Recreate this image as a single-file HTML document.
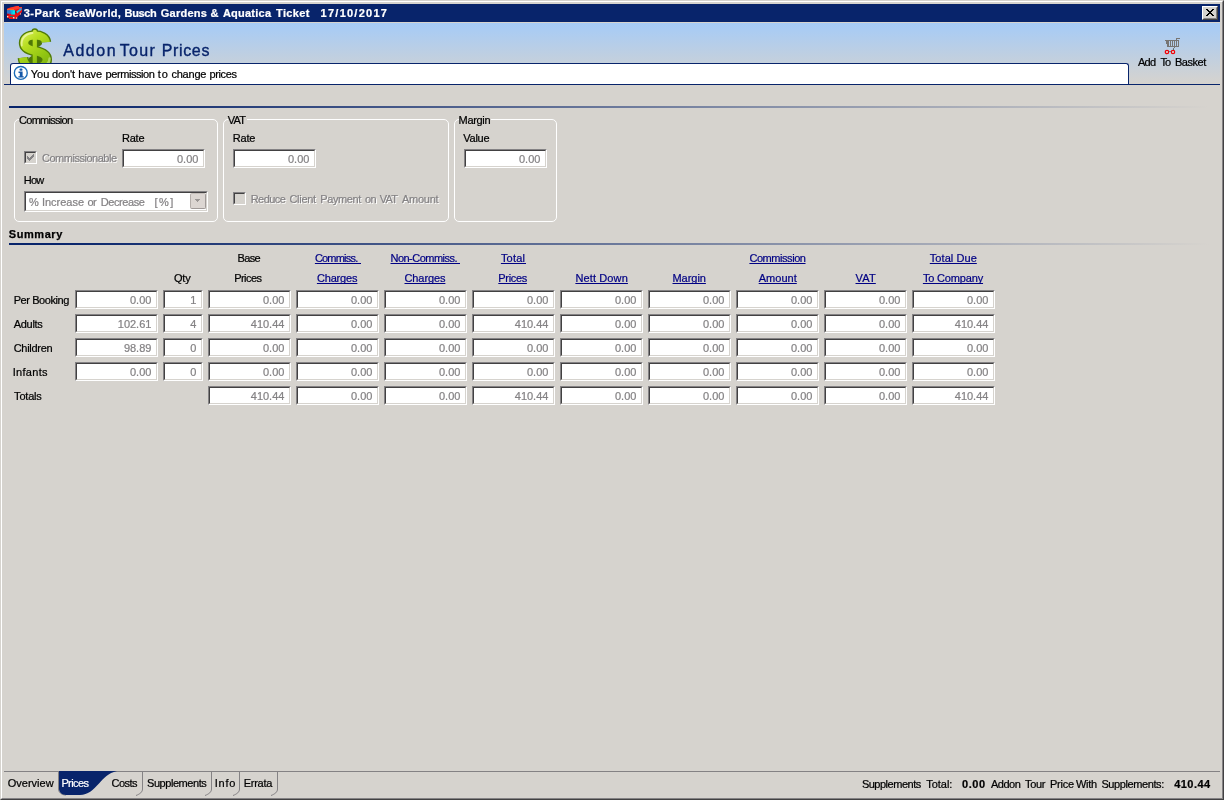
<!DOCTYPE html>
<html>
<head>
<meta charset="utf-8">
<title>Addon Tour Prices</title>
<style>
html,body{margin:0;padding:0;}
body{width:1224px;height:800px;overflow:hidden;background:#d6d3ce;font-family:"Liberation Sans",sans-serif;font-size:11px;color:#000;position:relative;}
.a{position:absolute;white-space:pre;-webkit-text-stroke:0.22px;}
.p{position:absolute;}
.win{left:0;top:0;width:1224px;height:800px;box-sizing:border-box;border:1px solid;border-color:#d6d3ce #424142 #424142 #d6d3ce;}
.win2{left:1px;top:1px;width:1222px;height:798px;box-sizing:border-box;border:1px solid;border-color:#fff #848284 #848284 #fff;}
.title{left:4px;top:4px;width:1216px;height:18px;background:#08246b;}
.close{left:1202px;top:6px;width:16px;height:14px;box-sizing:border-box;background:#d6d3ce;border:1px solid;border-color:#fff #424142 #424142 #fff;}
.close i{position:absolute;left:0;top:0;right:0;bottom:0;border:1px solid;border-color:#d6d3ce #848284 #848284 #d6d3ce;}
.hdr{left:4px;top:23px;width:1216px;height:61px;background:linear-gradient(#a5cbf7,#d6d3ce);}
.hline{left:4px;top:84px;width:1216px;height:1px;background:#08246b;}
.info{left:10px;top:63px;width:1119px;height:21px;box-sizing:border-box;background:#fff;border:1px solid #08246b;border-bottom:none;border-radius:3px 3px 0 0;}
.bl{height:2px;background:linear-gradient(90deg,#08246b 0%,#08246b 4%,#d6d3ce 100%);}
.grp{box-sizing:border-box;border:1px solid #fff;border-radius:5px;}
.gl{background:#d6d3ce;height:3px;}
.in{box-sizing:border-box;height:19px;width:83px;background:#fff;border:1px solid;border-color:#848284 #fff #fff #848284;}
.in i{position:absolute;left:0;top:0;right:0;bottom:0;border:1px solid;border-color:#424142 #d6d3ce #d6d3ce #424142;}
.q{width:40px;}
.v{color:#848284;}
.dis{color:#848284;text-shadow:1px 1px 0 #fff;}
.lnk{color:#000084;text-decoration:underline;text-decoration-skip-ink:none;}
.w{color:#fff;}
.cb{box-sizing:border-box;width:13px;height:13px;background:#d6d3ce;border:1px solid;border-color:#848284 #fff #fff #848284;}
.cb i{position:absolute;left:0;top:0;right:0;bottom:0;border:1px solid;border-color:#424142 #d6d3ce #d6d3ce #424142;}
.sep{width:1px;background:#848284;}
.tx{left:0;top:0;width:1224px;height:800px;will-change:transform;}

</style>
</head>
<body>
<div class="p win"></div><div class="p win2"></div>
<div class="p title"></div>
<div class="p close"><i></i></div>
<div class="p hdr"></div>
<div class="p hline"></div>
<div class="p info"></div>
<div class="p bl" style="left:9px;top:106px;width:1200px"></div>
<div class="p bl" style="left:9px;top:243px;width:1200px"></div>
<!-- groups -->
<div class="p grp" style="left:14px;top:119px;width:204px;height:103px"></div>
<div class="p gl" style="left:19px;top:118px;width:55px"></div>
<div class="p grp" style="left:223px;top:119px;width:226px;height:103px"></div>
<div class="p gl" style="left:228px;top:118px;width:19px"></div>
<div class="p grp" style="left:454px;top:119px;width:103px;height:103px"></div>
<div class="p gl" style="left:459px;top:118px;width:32px"></div>
<!-- group inputs -->
<div class="p cb" style="left:24px;top:151px"><i></i></div>
<div class="p in" style="left:122px;top:149px"><i></i></div>
<div class="p in" style="left:24px;top:191px;width:184px;height:21px"><i></i></div>
<div class="p in" style="left:233px;top:149px"><i></i></div>
<div class="p cb" style="left:233px;top:192px"><i></i></div>
<div class="p in" style="left:464px;top:149px"><i></i></div>
<!-- bottom -->
<div class="p" style="left:4px;top:771px;width:1216px;height:1px;background:#848284"></div>
<div class="p in" style="left:75px;top:290px"><i></i></div>
<div class="p in q" style="left:163px;top:290px"><i></i></div>
<div class="p in" style="left:208px;top:290px"><i></i></div>
<div class="p in" style="left:296px;top:290px"><i></i></div>
<div class="p in" style="left:384px;top:290px"><i></i></div>
<div class="p in" style="left:472px;top:290px"><i></i></div>
<div class="p in" style="left:560px;top:290px"><i></i></div>
<div class="p in" style="left:648px;top:290px"><i></i></div>
<div class="p in" style="left:736px;top:290px"><i></i></div>
<div class="p in" style="left:824px;top:290px"><i></i></div>
<div class="p in" style="left:912px;top:290px"><i></i></div>
<div class="p in" style="left:75px;top:314px"><i></i></div>
<div class="p in q" style="left:163px;top:314px"><i></i></div>
<div class="p in" style="left:208px;top:314px"><i></i></div>
<div class="p in" style="left:296px;top:314px"><i></i></div>
<div class="p in" style="left:384px;top:314px"><i></i></div>
<div class="p in" style="left:472px;top:314px"><i></i></div>
<div class="p in" style="left:560px;top:314px"><i></i></div>
<div class="p in" style="left:648px;top:314px"><i></i></div>
<div class="p in" style="left:736px;top:314px"><i></i></div>
<div class="p in" style="left:824px;top:314px"><i></i></div>
<div class="p in" style="left:912px;top:314px"><i></i></div>
<div class="p in" style="left:75px;top:338px"><i></i></div>
<div class="p in q" style="left:163px;top:338px"><i></i></div>
<div class="p in" style="left:208px;top:338px"><i></i></div>
<div class="p in" style="left:296px;top:338px"><i></i></div>
<div class="p in" style="left:384px;top:338px"><i></i></div>
<div class="p in" style="left:472px;top:338px"><i></i></div>
<div class="p in" style="left:560px;top:338px"><i></i></div>
<div class="p in" style="left:648px;top:338px"><i></i></div>
<div class="p in" style="left:736px;top:338px"><i></i></div>
<div class="p in" style="left:824px;top:338px"><i></i></div>
<div class="p in" style="left:912px;top:338px"><i></i></div>
<div class="p in" style="left:75px;top:362px"><i></i></div>
<div class="p in q" style="left:163px;top:362px"><i></i></div>
<div class="p in" style="left:208px;top:362px"><i></i></div>
<div class="p in" style="left:296px;top:362px"><i></i></div>
<div class="p in" style="left:384px;top:362px"><i></i></div>
<div class="p in" style="left:472px;top:362px"><i></i></div>
<div class="p in" style="left:560px;top:362px"><i></i></div>
<div class="p in" style="left:648px;top:362px"><i></i></div>
<div class="p in" style="left:736px;top:362px"><i></i></div>
<div class="p in" style="left:824px;top:362px"><i></i></div>
<div class="p in" style="left:912px;top:362px"><i></i></div>
<div class="p in" style="left:208px;top:386px"><i></i></div>
<div class="p in" style="left:296px;top:386px"><i></i></div>
<div class="p in" style="left:384px;top:386px"><i></i></div>
<div class="p in" style="left:472px;top:386px"><i></i></div>
<div class="p in" style="left:560px;top:386px"><i></i></div>
<div class="p in" style="left:648px;top:386px"><i></i></div>
<div class="p in" style="left:736px;top:386px"><i></i></div>
<div class="p in" style="left:824px;top:386px"><i></i></div>
<div class="p in" style="left:912px;top:386px"><i></i></div>
<div class="p" style="left:357px;top:263px;width:4px;height:1px;background:#000084"></div>
<div class="p" style="left:456px;top:263px;width:4px;height:1px;background:#000084"></div>
<div class="p" style="left:523px;top:263px;width:3px;height:1px;background:#000084"></div>

<!-- close X -->
<svg class="p" style="left:1206px;top:9px" width="8" height="7" shape-rendering="crispEdges"><path fill="#000" d="M0,0h2v1h-2zM6,0h2v1h-2zM1,1h2v1h-2zM5,1h2v1h-2zM2,2h4v1h-4zM3,3h2v1h-2zM2,4h4v1h-4zM1,5h2v1h-2zM5,5h2v1h-2zM0,6h2v1h-2zM6,6h2v1h-2z"/></svg>
<!-- bus icon -->
<svg class="p" style="left:6px;top:5px" width="17" height="16" viewBox="6 5 17 16">
<path d="M7,9 L9,8 L13,7 L17,6 L19,6 L19,7 L22,7 L22,12 L20.6,13.6 L20.6,15 L19.6,15 L17.4,17 L17,19 L9,19 L9,18 L7,18 Z" fill="#ee1118"/>
<path d="M7,9 L9,8 L13,7 L17,6 L19,6 L19,7 L22,7 L22,8 L16,9.4 L7,10 Z" fill="#ff3a2c"/>
<path d="M7,9.2 L14,9 L14,10 L7,10.2 Z" fill="#ff6a20"/>
<path d="M7,10.2 L11,10 L11,14 L7,13.4 Z" fill="#2a78d0"/>
<path d="M10.6,10 L15.2,10.2 L15,14.6 L11.4,14.4 Z" fill="#00e6f4"/>
<path d="M11,10 L13,10 L12.4,14.2 L11.2,14.2 Z" fill="#10b4dc"/>
<path d="M15.3,10.6 L16.6,11.4 L16.6,13.4 L15.3,12.8 Z" fill="#40202c"/>
<path d="M16.4,11.2 L21.4,8.2 L21.4,10 L17,13.6 Z" fill="#18c8e8"/>
<path d="M19.4,8.6 L21.4,8 L21.4,9.4 L19.6,10.8 Z" fill="#3a9ce0"/>
<path d="M7,14 L9,14.2 L9,15 L7,15 Z" fill="#b00010"/>
<rect x="7" y="16" width="1.3" height="1.3" fill="#e8f0d0"/>
<rect x="10" y="16" width="3.4" height="1" rx="0.5" fill="#0a8474"/>
<rect x="13" y="17" width="1.4" height="1.4" fill="#c8f4e8"/>
<rect x="16.4" y="17" width="0.7" height="2" fill="#d8e8d0"/>
<rect x="20.2" y="13" width="0.6" height="1.6" fill="#d8e8d0"/>
</svg>
<!-- dollar -->
<svg class="p" style="left:10px;top:23px" width="52" height="40" viewBox="10 23 52 40">
<defs>
<linearGradient id="dg" gradientUnits="userSpaceOnUse" x1="20" y1="28" x2="50" y2="68"><stop offset="0" stop-color="#e4f46a"/><stop offset="0.35" stop-color="#b8de22"/><stop offset="0.7" stop-color="#92c612"/><stop offset="1" stop-color="#7aae10"/></linearGradient>
</defs>
<ellipse cx="35" cy="43.2" rx="7" ry="4" fill="#4d7508"/>
<ellipse cx="35.4" cy="59.8" rx="7" ry="4.2" fill="#4d7508"/>
<g fill="none" stroke-linecap="butt" stroke-linejoin="round">
<path d="M45.8,42.2 C45.5,38 41,35.6 35,35.6 C28,35.6 24.2,38.5 24.2,43 C24.2,47.5 28,49.5 35,51 C42,52.5 46.6,54.5 46.6,59.5 C46.6,65 41,68 35,68 C28,68 24,65 23,57.6" stroke="#507a06" stroke-width="10.8"/>
<path d="M34.8,31.6 L34.8,72" stroke="#507a06" stroke-width="6.6" stroke-linecap="round"/>
<path d="M45.8,42.2 C45.5,38 41,35.6 35,35.6 C28,35.6 24.2,38.5 24.2,43 C24.2,47.5 28,49.5 35,51 C42,52.5 46.6,54.5 46.6,59.5 C46.6,65 41,68 35,68 C28,68 24,65 23,57.6" stroke="url(#dg)" stroke-width="8"/>
<path d="M34.8,31.8 L34.8,72" stroke="url(#dg)" stroke-width="4.2" stroke-linecap="round"/>
<path d="M21.8,45.5 C20.8,39 25,34 32.5,33" stroke="#ffffe0" stroke-width="1.8" opacity="0.55" stroke-linecap="round"/>
<path d="M40,66.5 C45,66 49.5,63.5 49.6,58.5" stroke="#f0ffd0" stroke-width="2.4" opacity="0.4" stroke-linecap="round"/>
</g>
</svg>
<!-- info icon -->
<svg class="p" style="left:13px;top:65px" width="16" height="16" viewBox="0 0 16 16">
<circle cx="7.8" cy="7.9" r="6.45" fill="#fff" stroke="#1a6cb8" stroke-width="1.35"/>
<rect x="6.5" y="3.4" width="3" height="2.4" rx="1" fill="#1458a8"/>
<path d="M5.5,6.6h4.1v4.6h1.1v1.3h-5.3v-1.3h1.4v-3.3h-1.3z" fill="#1458a8"/>
</svg>
<!-- cart -->
<svg class="p" style="left:1165px;top:38px" width="16" height="17" shape-rendering="crispEdges">
<g fill="#777573">
<rect x="11" y="0" width="4" height="1"/>
<rect x="11" y="1" width="1" height="2"/>
<rect x="0" y="2" width="14" height="1"/>
<rect x="1" y="3" width="1" height="3"/>
<rect x="2" y="3" width="2" height="6"/>
<rect x="5" y="3" width="1" height="6"/>
<rect x="7" y="3" width="1" height="6"/>
<rect x="9" y="3" width="1" height="6"/>
<rect x="11" y="3" width="1" height="6"/>
<rect x="13" y="3" width="1" height="6"/>
<rect x="2" y="8" width="12" height="1"/>
<rect x="9" y="9" width="1" height="1"/>
<rect x="8" y="10" width="1" height="1"/>
</g>
<rect x="8" y="11" width="1" height="1" fill="#2a8a8a"/>
<rect x="4" y="13" width="3" height="1" fill="#4a9a9a"/>
</svg>
<svg class="p" style="left:1164px;top:49px" width="14" height="7">
<circle cx="3" cy="3" r="1.6" fill="#d8fff8" stroke="#f00008" stroke-width="1.4"/>
<circle cx="9" cy="3" r="1.6" fill="#d8fff8" stroke="#f00008" stroke-width="1.4"/>
</svg>
<!-- check mark -->
<svg class="p" style="left:27px;top:154px" width="7" height="7" shape-rendering="crispEdges"><path fill="#848284" d="M0,2h1v3h-1zM1,3h1v3h-1zM2,4h1v3h-1zM3,3h1v3h-1zM4,2h1v3h-1zM5,1h1v3h-1zM6,0h1v3h-1z"/></svg>
<!-- combo button -->
<div class="p" style="left:190px;top:193px;width:16px;height:16px;box-sizing:border-box;background:#dcd6d2;border:1px solid;border-color:#c4beba #a09a98 #a09a98 #b4aeaa;border-radius:2px"></div>
<svg class="p" style="left:195px;top:199px" width="5" height="3" shape-rendering="crispEdges"><path fill="#9a9694" d="M0,0h5v1h-5zM1,1h3v1h-3zM2,2h1v1h-1z"/></svg>
<!-- tabs -->
<svg class="p" style="left:0;top:770px" width="320" height="28">
<path d="M58.5,1.5 L58.5,19 C58.5,22 61,25 66,25" fill="none" stroke="#848284" stroke-width="1"/>
<path d="M59,1 L117,1 C108,3 104,8 99,13.5 C93,20 88,25 80,25 L66,25 C62,25 59,22 59,19 Z" fill="#08246b"/>
<g fill="none" stroke="#848284" stroke-width="1">
<path d="M142.5,2 L142.5,19 C142.5,22 140,24 136,25.5"/>
<path d="M211.5,2 L211.5,19 C211.5,22 209,24 205,25.5"/>
<path d="M239.5,2 L239.5,19 C239.5,22 237,24 233,25.5"/>
<path d="M277.5,2 L277.5,19 C277.5,22 275,24 271,25.5"/>
</g>
</svg>

<div class="p tx">
<span class="a w" style="left:23.70px;top:6.69px;letter-spacing:0.52px;line-height:13px;font-weight:bold;">3-Park</span>
<span class="a w" style="left:64.90px;top:6.69px;letter-spacing:0.3px;line-height:13px;font-weight:bold;">SeaWorld,</span>
<span class="a w" style="left:124.60px;top:6.69px;letter-spacing:-0.37px;line-height:13px;font-weight:bold;">Busch</span>
<span class="a w" style="left:160.80px;top:6.69px;letter-spacing:0.25px;line-height:13px;font-weight:bold;">Gardens</span>
<span class="a w" style="left:210.50px;top:6.69px;letter-spacing:0.0px;line-height:13px;font-weight:bold;">&amp;</span>
<span class="a w" style="left:222.90px;top:6.69px;letter-spacing:0.24px;line-height:13px;font-weight:bold;">Aquatica</span>
<span class="a w" style="left:276.00px;top:6.69px;letter-spacing:0.37px;line-height:13px;font-weight:bold;">Ticket</span>
<span class="a w" style="left:320.60px;top:6.69px;letter-spacing:1.25px;line-height:13px;font-weight:bold;">17/10/2017</span>
<span class="a " style="left:63.20px;top:40.96px;letter-spacing:1.53px;line-height:19px;font-size:16px;color:#08246b;-webkit-text-stroke:0.35px #08246b;">Addon</span>
<span class="a " style="left:119.70px;top:40.96px;letter-spacing:1.37px;line-height:19px;font-size:16px;color:#08246b;-webkit-text-stroke:0.35px #08246b;">Tour</span>
<span class="a " style="left:161.80px;top:40.96px;letter-spacing:0.63px;line-height:19px;font-size:16px;color:#08246b;-webkit-text-stroke:0.35px #08246b;">Prices</span>
<span class="a " style="left:30.70px;top:67.69px;letter-spacing:0.03px;line-height:13px;">You</span>
<span class="a " style="left:51.90px;top:67.69px;letter-spacing:-0.06px;line-height:13px;">don't</span>
<span class="a " style="left:78.30px;top:67.69px;letter-spacing:-0.01px;line-height:13px;">have</span>
<span class="a " style="left:105.60px;top:67.69px;letter-spacing:-0.44px;line-height:13px;">permission</span>
<span class="a " style="left:157.80px;top:67.69px;letter-spacing:0.94px;line-height:13px;">to</span>
<span class="a " style="left:171.40px;top:67.69px;letter-spacing:-0.21px;line-height:13px;">change</span>
<span class="a " style="left:209.50px;top:67.69px;letter-spacing:-0.39px;line-height:13px;">prices</span>
<span class="a " style="left:1138.00px;top:55.69px;letter-spacing:-0.78px;line-height:13px;">Add</span>
<span class="a " style="left:1160.38px;top:55.69px;letter-spacing:-0.85px;line-height:13px;">To</span>
<span class="a " style="left:1175.00px;top:55.69px;letter-spacing:-0.47px;line-height:13px;">Basket</span>
<span class="a " style="left:19.00px;top:113.69px;letter-spacing:-0.71px;line-height:13px;">Commission</span>
<span class="a " style="left:122.00px;top:131.69px;letter-spacing:-0.24px;line-height:13px;">Rate</span>
<span class="a dis" style="left:42.00px;top:151.69px;letter-spacing:-0.48px;line-height:13px;">Commissionable</span>
<span class="a " style="left:23.82px;top:173.69px;letter-spacing:-0.85px;line-height:13px;">How</span>
<span class="a v" style="left:28.90px;top:195.69px;letter-spacing:0.0px;line-height:13px;">%</span>
<span class="a v" style="left:41.90px;top:195.69px;letter-spacing:0.0px;line-height:13px;">Increase</span>
<span class="a v" style="left:87.62px;top:195.69px;letter-spacing:-0.85px;line-height:13px;">or</span>
<span class="a v" style="left:100.80px;top:195.69px;letter-spacing:-0.42px;line-height:13px;">Decrease</span>
<span class="a v" style="left:154.60px;top:195.69px;letter-spacing:1.38px;line-height:13px;">[%]</span>
<span class="a " style="left:227.80px;top:113.69px;letter-spacing:-0.82px;line-height:13px;">VAT</span>
<span class="a " style="left:232.80px;top:131.69px;letter-spacing:-0.24px;line-height:13px;">Rate</span>
<span class="a dis" style="left:250.70px;top:192.69px;letter-spacing:-0.54px;line-height:13px;">Reduce</span>
<span class="a dis" style="left:289.40px;top:192.69px;letter-spacing:-0.27px;line-height:13px;">Client</span>
<span class="a dis" style="left:320.20px;top:192.69px;letter-spacing:-0.38px;line-height:13px;">Payment</span>
<span class="a dis" style="left:365.10px;top:192.69px;letter-spacing:-0.72px;line-height:13px;">on</span>
<span class="a dis" style="left:379.80px;top:192.69px;letter-spacing:-0.77px;line-height:13px;">VAT</span>
<span class="a dis" style="left:401.90px;top:192.69px;letter-spacing:-0.23px;line-height:13px;">Amount</span>
<span class="a " style="left:458.60px;top:113.69px;letter-spacing:-0.34px;line-height:13px;">Margin</span>
<span class="a " style="left:463.20px;top:131.69px;letter-spacing:-0.22px;line-height:13px;">Value</span>
<span class="a " style="left:8.80px;top:227.69px;letter-spacing:0.56px;line-height:13px;font-weight:bold;-webkit-text-stroke:0.25px #000;">Summary</span>
<span class="a " style="left:174.00px;top:271.69px;letter-spacing:-0.21px;line-height:13px;">Qty</span>
<span class="a " style="left:237.60px;top:251.69px;letter-spacing:-0.68px;line-height:13px;">Base</span>
<span class="a " style="left:234.30px;top:271.69px;letter-spacing:-0.59px;line-height:13px;">Prices</span>
<span class="a lnk" style="left:314.90px;top:251.69px;letter-spacing:-0.79px;line-height:13px;">Commiss.</span>
<span class="a lnk" style="left:316.90px;top:271.69px;letter-spacing:-0.16px;line-height:13px;">Charges</span>
<span class="a lnk" style="left:390.50px;top:251.69px;letter-spacing:-0.52px;line-height:13px;">Non-Commiss.</span>
<span class="a lnk" style="left:404.50px;top:271.69px;letter-spacing:-0.1px;line-height:13px;">Charges</span>
<span class="a lnk" style="left:500.90px;top:251.69px;letter-spacing:0.23px;line-height:13px;">Total</span>
<span class="a lnk" style="left:498.30px;top:271.69px;letter-spacing:-0.33px;line-height:13px;">Prices</span>
<span class="a lnk" style="left:575.40px;top:271.69px;letter-spacing:0.13px;line-height:13px;">Nett Down</span>
<span class="a lnk" style="left:672.50px;top:271.69px;letter-spacing:-0.04px;line-height:13px;">Margin</span>
<span class="a lnk" style="left:749.40px;top:251.69px;letter-spacing:-0.44px;line-height:13px;">Commission</span>
<span class="a lnk" style="left:758.70px;top:271.69px;letter-spacing:0.03px;line-height:13px;">Amount</span>
<span class="a lnk" style="left:855.50px;top:271.69px;letter-spacing:0.18px;line-height:13px;">VAT</span>
<span class="a lnk" style="left:929.80px;top:251.69px;letter-spacing:0.06px;line-height:13px;">Total Due</span>
<span class="a lnk" style="left:922.90px;top:271.69px;letter-spacing:-0.16px;line-height:13px;">To Company</span>
<span class="a " style="left:13.70px;top:293.69px;letter-spacing:-0.42px;line-height:13px;">Per Booking</span>
<span class="a " style="left:13.70px;top:317.69px;letter-spacing:-0.29px;line-height:13px;">Adults</span>
<span class="a " style="left:13.70px;top:341.69px;letter-spacing:-0.29px;line-height:13px;">Children</span>
<span class="a " style="left:12.70px;top:365.69px;letter-spacing:0.31px;line-height:13px;">Infants</span>
<span class="a " style="left:14.10px;top:389.69px;letter-spacing:-0.21px;line-height:13px;">Totals</span>
<span class="a v" style="left:130.01px;top:293.69px;letter-spacing:0px;line-height:13px;">0.00</span>
<span class="a v" style="left:190.30px;top:293.69px;letter-spacing:0px;line-height:13px;">1</span>
<span class="a v" style="left:263.01px;top:293.69px;letter-spacing:0px;line-height:13px;">0.00</span>
<span class="a v" style="left:351.01px;top:293.69px;letter-spacing:0px;line-height:13px;">0.00</span>
<span class="a v" style="left:439.01px;top:293.69px;letter-spacing:0px;line-height:13px;">0.00</span>
<span class="a v" style="left:527.01px;top:293.69px;letter-spacing:0px;line-height:13px;">0.00</span>
<span class="a v" style="left:615.01px;top:293.69px;letter-spacing:0px;line-height:13px;">0.00</span>
<span class="a v" style="left:703.01px;top:293.69px;letter-spacing:0px;line-height:13px;">0.00</span>
<span class="a v" style="left:791.01px;top:293.69px;letter-spacing:0px;line-height:13px;">0.00</span>
<span class="a v" style="left:879.01px;top:293.69px;letter-spacing:0px;line-height:13px;">0.00</span>
<span class="a v" style="left:967.01px;top:293.69px;letter-spacing:0px;line-height:13px;">0.00</span>
<span class="a v" style="left:117.77px;top:317.69px;letter-spacing:0px;line-height:13px;">102.61</span>
<span class="a v" style="left:190.30px;top:317.69px;letter-spacing:0px;line-height:13px;">4</span>
<span class="a v" style="left:250.77px;top:317.69px;letter-spacing:0px;line-height:13px;">410.44</span>
<span class="a v" style="left:351.01px;top:317.69px;letter-spacing:0px;line-height:13px;">0.00</span>
<span class="a v" style="left:439.01px;top:317.69px;letter-spacing:0px;line-height:13px;">0.00</span>
<span class="a v" style="left:514.77px;top:317.69px;letter-spacing:0px;line-height:13px;">410.44</span>
<span class="a v" style="left:615.01px;top:317.69px;letter-spacing:0px;line-height:13px;">0.00</span>
<span class="a v" style="left:703.01px;top:317.69px;letter-spacing:0px;line-height:13px;">0.00</span>
<span class="a v" style="left:791.01px;top:317.69px;letter-spacing:0px;line-height:13px;">0.00</span>
<span class="a v" style="left:879.01px;top:317.69px;letter-spacing:0px;line-height:13px;">0.00</span>
<span class="a v" style="left:954.77px;top:317.69px;letter-spacing:0px;line-height:13px;">410.44</span>
<span class="a v" style="left:123.89px;top:341.69px;letter-spacing:0px;line-height:13px;">98.89</span>
<span class="a v" style="left:190.30px;top:341.69px;letter-spacing:0px;line-height:13px;">0</span>
<span class="a v" style="left:263.01px;top:341.69px;letter-spacing:0px;line-height:13px;">0.00</span>
<span class="a v" style="left:351.01px;top:341.69px;letter-spacing:0px;line-height:13px;">0.00</span>
<span class="a v" style="left:439.01px;top:341.69px;letter-spacing:0px;line-height:13px;">0.00</span>
<span class="a v" style="left:527.01px;top:341.69px;letter-spacing:0px;line-height:13px;">0.00</span>
<span class="a v" style="left:615.01px;top:341.69px;letter-spacing:0px;line-height:13px;">0.00</span>
<span class="a v" style="left:703.01px;top:341.69px;letter-spacing:0px;line-height:13px;">0.00</span>
<span class="a v" style="left:791.01px;top:341.69px;letter-spacing:0px;line-height:13px;">0.00</span>
<span class="a v" style="left:879.01px;top:341.69px;letter-spacing:0px;line-height:13px;">0.00</span>
<span class="a v" style="left:967.01px;top:341.69px;letter-spacing:0px;line-height:13px;">0.00</span>
<span class="a v" style="left:130.01px;top:365.69px;letter-spacing:0px;line-height:13px;">0.00</span>
<span class="a v" style="left:190.30px;top:365.69px;letter-spacing:0px;line-height:13px;">0</span>
<span class="a v" style="left:263.01px;top:365.69px;letter-spacing:0px;line-height:13px;">0.00</span>
<span class="a v" style="left:351.01px;top:365.69px;letter-spacing:0px;line-height:13px;">0.00</span>
<span class="a v" style="left:439.01px;top:365.69px;letter-spacing:0px;line-height:13px;">0.00</span>
<span class="a v" style="left:527.01px;top:365.69px;letter-spacing:0px;line-height:13px;">0.00</span>
<span class="a v" style="left:615.01px;top:365.69px;letter-spacing:0px;line-height:13px;">0.00</span>
<span class="a v" style="left:703.01px;top:365.69px;letter-spacing:0px;line-height:13px;">0.00</span>
<span class="a v" style="left:791.01px;top:365.69px;letter-spacing:0px;line-height:13px;">0.00</span>
<span class="a v" style="left:879.01px;top:365.69px;letter-spacing:0px;line-height:13px;">0.00</span>
<span class="a v" style="left:967.01px;top:365.69px;letter-spacing:0px;line-height:13px;">0.00</span>
<span class="a v" style="left:250.77px;top:389.69px;letter-spacing:0px;line-height:13px;">410.44</span>
<span class="a v" style="left:351.01px;top:389.69px;letter-spacing:0px;line-height:13px;">0.00</span>
<span class="a v" style="left:439.01px;top:389.69px;letter-spacing:0px;line-height:13px;">0.00</span>
<span class="a v" style="left:514.77px;top:389.69px;letter-spacing:0px;line-height:13px;">410.44</span>
<span class="a v" style="left:615.01px;top:389.69px;letter-spacing:0px;line-height:13px;">0.00</span>
<span class="a v" style="left:703.01px;top:389.69px;letter-spacing:0px;line-height:13px;">0.00</span>
<span class="a v" style="left:791.01px;top:389.69px;letter-spacing:0px;line-height:13px;">0.00</span>
<span class="a v" style="left:879.01px;top:389.69px;letter-spacing:0px;line-height:13px;">0.00</span>
<span class="a v" style="left:954.77px;top:389.69px;letter-spacing:0px;line-height:13px;">410.44</span>
<span class="a v" style="left:177.01px;top:152.69px;letter-spacing:0px;line-height:13px;">0.00</span>
<span class="a v" style="left:288.01px;top:152.69px;letter-spacing:0px;line-height:13px;">0.00</span>
<span class="a v" style="left:519.01px;top:152.69px;letter-spacing:0px;line-height:13px;">0.00</span>
<span class="a " style="left:7.80px;top:776.69px;letter-spacing:-0.01px;line-height:13px;">Overview</span>
<span class="a w" style="left:61.40px;top:776.69px;letter-spacing:-0.61px;line-height:13px;">Prices</span>
<span class="a " style="left:111.60px;top:776.69px;letter-spacing:-0.55px;line-height:13px;">Costs</span>
<span class="a " style="left:147.00px;top:776.69px;letter-spacing:-0.44px;line-height:13px;">Supplements</span>
<span class="a " style="left:214.70px;top:776.69px;letter-spacing:0.79px;line-height:13px;">Info</span>
<span class="a " style="left:243.70px;top:776.69px;letter-spacing:-0.27px;line-height:13px;">Errata</span>
<span class="a " style="left:861.90px;top:777.69px;letter-spacing:-0.49px;line-height:13px;">Supplements</span>
<span class="a " style="left:926.30px;top:777.69px;letter-spacing:-0.05px;line-height:13px;">Total:</span>
<span class="a " style="left:961.90px;top:777.69px;letter-spacing:0.64px;line-height:13px;font-weight:bold;">0.00</span>
<span class="a " style="left:990.90px;top:777.69px;letter-spacing:-0.45px;line-height:13px;">Addon</span>
<span class="a " style="left:1025.10px;top:777.69px;letter-spacing:-0.35px;line-height:13px;">Tour</span>
<span class="a " style="left:1049.90px;top:777.69px;letter-spacing:-0.21px;line-height:13px;">Price</span>
<span class="a " style="left:1076.00px;top:777.69px;letter-spacing:-0.29px;line-height:13px;">With</span>
<span class="a " style="left:1101.40px;top:777.69px;letter-spacing:-0.4px;line-height:13px;">Supplements:</span>
<span class="a " style="left:1174.20px;top:777.69px;letter-spacing:0.45px;line-height:13px;font-weight:bold;">410.44</span>
</div>
</body>
</html>
